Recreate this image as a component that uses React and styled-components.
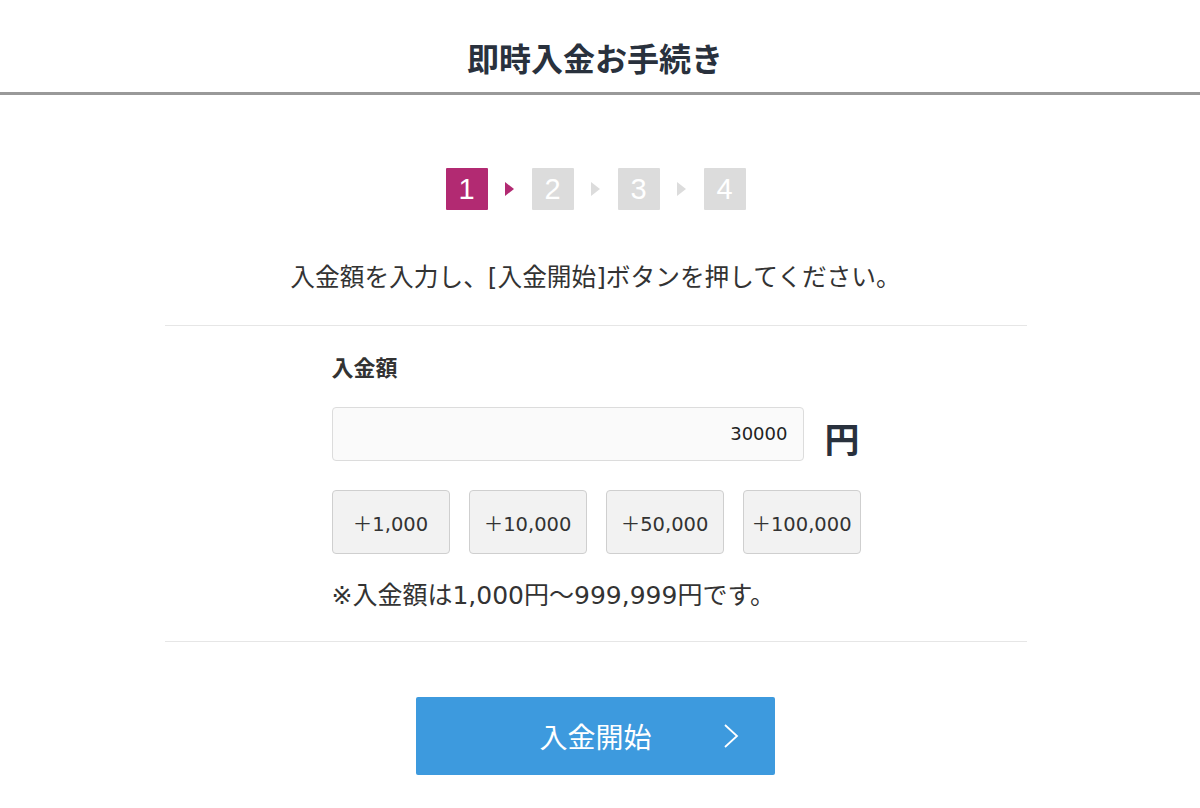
import React from 'react';
import styled, { createGlobalStyle } from 'styled-components';

const GlobalStyle = createGlobalStyle`
  html, body {
    margin: 0;
    padding: 0;
    background: #fff;
  }
  body {
    font-family: "DejaVu Sans", "Noto Sans CJK JP", sans-serif;
    color: #333;
  }
`

const Header = styled.header`
  box-sizing: border-box;
  height: 95px;
  border-bottom: 3px solid #999;
  display: flex;
  justify-content: center;
  padding: 38px 10px 0 0;
`
const Title = styled.h1`
  margin: 0;
  font-family: "Noto Sans CJK JP", sans-serif;
  font-size: 32px;
  line-height: 38px;
  font-weight: 700;
  color: #29313d;
`

const Main = styled.main`
  display: flex;
  flex-direction: column;
  align-items: center;
  padding: 73px 9px 0 0;
`

const Steps = styled.ol`
  display: flex;
  align-items: center;
  margin: 0;
  padding: 0;
  list-style: none;
`
const Step = styled.li`
  width: 42px;
  height: 42px;
  display: flex;
  align-items: center;
  justify-content: center;
  background: ${p => p.active ? '#b22a72' : '#dcdcdc'};
  color: #fff;
  font-family: "Liberation Sans", sans-serif;
  font-size: 29px;
  border-radius: 1px;
`
const Arrow = styled.span`
  width: 44px;
  display: flex;
  justify-content: center;
  &::before {
    content: '';
    border-top: 7px solid transparent;
    border-bottom: 7px solid transparent;
    border-left: 9px solid ${p => p.active ? '#b22a72' : '#dcdcdc'};
  }
`

const Lead = styled.p`
  margin: 50px 0 0;
  font-size: 24.7px;
  line-height: 36px;
  color: #333;
`

const Section = styled.section`
  box-sizing: border-box;
  width: 862px;
  margin-top: 29px;
  border-top: 1px solid #e6e6e6;
  border-bottom: 1px solid #e6e6e6;
  padding: 25px 0 29px;
  display: flex;
  justify-content: center;
`
const Form = styled.div`
  width: 528px;
`
const Label = styled.div`
  font-family: "Noto Sans CJK JP", sans-serif;
  font-size: 22px;
  line-height: 30px;
  font-weight: 700;
  color: #333;
`
const InputRow = styled.div`
  display: flex;
  align-items: center;
  gap: 20px;
  margin-top: 23px;
`
const AmountInput = styled.input`
  box-sizing: border-box;
  width: 474px;
  height: 54px;
  border: 1px solid #dcdcdc;
  border-radius: 4px;
  background: #fafafa;
  padding: 0 16px;
  text-align: right;
  font-family: "DejaVu Sans", "Noto Sans CJK JP", sans-serif;
  font-size: 18px;
  color: #222;
  outline: none;
`
const Yen = styled.span`
  font-family: "Noto Sans CJK JP", sans-serif;
  font-size: 35px;
  font-weight: 700;
  color: #29313d;
  margin-top: 8px;
`
const Quick = styled.div`
  display: grid;
  grid-template-columns: repeat(4, 118px);
  gap: 19px;
  margin-top: 27px;
`
const QuickButton = styled.button`
  box-sizing: border-box;
  height: 64px;
  border: 1px solid #cfcfcf;
  border-radius: 4px;
  background: #f2f2f2;
  font-family: "DejaVu Sans", "Noto Sans CJK JP", sans-serif;
  font-size: 19.5px;
  color: #333;
  padding: 0;
  white-space: nowrap;
`
const Note = styled.p`
  margin: 26px 0 0;
  font-size: 25px;
  line-height: 32px;
  color: #333;
`

const Submit = styled.button`
  position: relative;
  margin-top: 55px;
  width: 359px;
  height: 78px;
  border: none;
  border-radius: 2px;
  background: #3d9ade;
  color: #fff;
  font-family: "Noto Sans CJK JP", sans-serif;
  font-size: 28px;
  display: flex;
  align-items: center;
  justify-content: center;
`
const Chevron = styled.svg`
  position: absolute;
  right: 36px;
  top: 50%;
  transform: translateY(-50%);
`

const amounts = ['1,000', '10,000', '50,000', '100,000'];

export default function App() {
  return (
    <>
      <GlobalStyle />
      <Header>
        <Title>即時入金お手続き</Title>
      </Header>
      <Main>
        <Steps>
          <Step active>1</Step>
          <Arrow active />
          <Step>2</Step>
          <Arrow />
          <Step>3</Step>
          <Arrow />
          <Step>4</Step>
        </Steps>
        <Lead>入金額を入力し、[入金開始]ボタンを押してください。</Lead>
        <Section>
          <Form>
            <Label>入金額</Label>
            <InputRow>
              <AmountInput defaultValue="30000" />
              <Yen>円</Yen>
            </InputRow>
            <Quick>
              {amounts.map(a => (
                <QuickButton key={a}>＋{a}</QuickButton>
              ))}
            </Quick>
            <Note>※入金額は1,000円〜999,999円です。</Note>
          </Form>
        </Section>
        <Submit>
          入金開始
          <Chevron width="16" height="26" viewBox="0 0 16 26">
            <path d="M2 2 L14 13 L2 24" fill="none" stroke="#fff" strokeWidth="1.8" />
          </Chevron>
        </Submit>
      </Main>
    </>
  );
}
